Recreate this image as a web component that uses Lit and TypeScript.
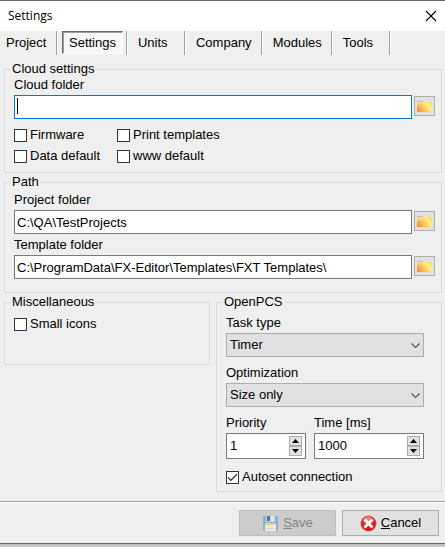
import { LitElement, html, css, svg } from "lit";
import { customElement, property } from "lit/decorators.js";

const controls = css`
  :host {
    display: block;
    font-family: "Liberation Sans", Arial, sans-serif;
    font-size: 13px;
    line-height: 16px;
    color: #000;
  }
  * {
    box-sizing: border-box;
  }
  button,
  input,
  select {
    font: inherit;
    color: inherit;
    margin: 0;
    border-radius: 0;
    outline: none;
  }
  label {
    display: block;
  }
`;

const folderIcon = svg`
  <svg width="17" height="13" viewBox="0 0 17 13" aria-hidden="true">
    <defs>
      <linearGradient id="fold" x1="0" y1="0.75" x2="1" y2="0.25">
        <stop offset="0" stop-color="#f0923c" />
        <stop offset="0.4" stop-color="#f9c65a" />
        <stop offset="0.75" stop-color="#faf08a" />
        <stop offset="1" stop-color="#f8dc68" />
      </linearGradient>
      <linearGradient id="shine" x1="0" y1="0" x2="1" y2="1">
        <stop offset="0" stop-color="#fff" stop-opacity="0.5" />
        <stop offset="0.5" stop-color="#fff" stop-opacity="0" />
      </linearGradient>
    </defs>
    <path d="M1 1H7V2H1Z" fill="#c3bfb8" />
    <path d="M1 2H16V12H1Z" fill="url(#fold)" />
    <path d="M1 2H11L1 9Z" fill="url(#shine)" />
    <path d="M7 1.5H16" stroke="#eedfc4" />
    <path d="M16.5 2V11" stroke="#efe3b8" />
  </svg>`;

@customElement("folder-field")
class FolderField extends LitElement {
  @property() label = "";
  @property() value = "";
  @property({ type: Boolean }) active = false;

  static styles = [
    controls,
    css`
      .row {
        display: flex;
        align-items: flex-start;
        gap: 2px;
        margin-top: 2px;
      }
      .box {
        flex: 1;
        min-width: 0;
        position: relative;
      }
      .text {
        display: block;
        width: 100%;
        height: 24px;
        padding: 0 2px;
        border: 1px solid #7a7a7a;
        background: #fff;
      }
      .active .text {
        border-color: #0078d7;
        caret-color: transparent;
      }
      .active::after {
        content: "";
        position: absolute;
        left: 3px;
        top: 3px;
        width: 1px;
        height: 16px;
        background: #000;
      }
      .browse {
        display: flex;
        align-items: center;
        justify-content: center;
        width: 21px;
        height: 20px;
        margin-top: 1px;
        padding: 0;
        border: 1px solid #adadad;
        background: #e1e1e1;
      }
    `,
  ];

  render() {
    return html`
      <label for="path">${this.label}</label>
      <div class="row">
        <div class="box ${this.active ? "active" : ""}">
          <input class="text" id="path" type="text" .value=${this.value} />
        </div>
        <button class="browse" type="button" aria-label="Browse ${this.label}">${folderIcon}</button>
      </div>
    `;
  }
}

@customElement("check-box")
class CheckBox extends LitElement {
  @property() label = "";
  @property({ type: Boolean }) checked = false;

  static styles = [
    controls,
    css`
      .check {
        display: flex;
        align-items: center;
        gap: 3px;
        height: 16px;
        white-space: nowrap;
      }
      .mark {
        position: relative;
        display: flex;
      }
      .tick {
        appearance: none;
        width: 13px;
        height: 13px;
        border: 1px solid #333;
        background: #fff;
      }
      .glyph {
        position: absolute;
        inset: 0;
        display: none;
        pointer-events: none;
      }
      .tick:checked + .glyph {
        display: block;
      }
    `,
  ];

  render() {
    return html`
      <label class="check">
        <span class="mark">
          <input class="tick" type="checkbox" .checked=${this.checked} />
          <svg class="glyph" width="13" height="13" viewBox="0 0 13 13" aria-hidden="true">
            <path d="M2 6.5L4.8 9.3L11 3.2" fill="none" stroke="#333" stroke-width="1.2" />
          </svg>
        </span>
        ${this.label}
      </label>
    `;
  }
}

@customElement("drop-down")
class DropDown extends LitElement {
  @property() label = "";
  @property() value = "";

  static styles = [
    controls,
    css`
      .box {
        position: relative;
        margin-top: 2px;
      }
      .select {
        appearance: none;
        display: block;
        width: 100%;
        height: 24px;
        padding: 0 20px 0 3px;
        border: 1px solid #adadad;
        background: #e1e1e1;
      }
      .chevron {
        position: absolute;
        right: 4px;
        top: 9px;
        pointer-events: none;
      }
    `,
  ];

  render() {
    return html`
      <label for="choice">${this.label}</label>
      <div class="box">
        <select class="select" id="choice">
          <option>${this.value}</option>
        </select>
        <svg class="chevron" width="9" height="7" viewBox="0 0 9 7" aria-hidden="true">
          <path d="M0.5 1.5L4.5 5.5L8.5 1.5" fill="none" stroke="#555" stroke-width="1.2" />
        </svg>
      </div>
    `;
  }
}

@customElement("spin-edit")
class SpinEdit extends LitElement {
  @property() label = "";
  @property({ type: Number }) value = 0;

  static styles = [
    controls,
    css`
      .box {
        display: flex;
        height: 26px;
        margin-top: 2px;
        padding: 2px 3px 2px 0;
        border: 1px solid #7a7a7a;
        background: #fff;
      }
      .number {
        appearance: textfield;
        flex: 1;
        width: 0;
        min-width: 0;
        height: 18px;
        padding: 0 0 0 3px;
        border: 0;
        background: none;
      }
      .number::-webkit-inner-spin-button {
        appearance: none;
        margin: 0;
      }
      .steps {
        display: flex;
        flex-direction: column;
      }
      .step {
        display: flex;
        align-items: center;
        justify-content: center;
        width: 13px;
        height: 10px;
        padding: 0;
        border: 1px solid #adadad;
        background: #e1e1e1;
      }
    `,
  ];

  render() {
    return html`
      <label for="number">${this.label}</label>
      <div class="box">
        <input class="number" id="number" type="number" .value=${String(this.value)} />
        <span class="steps">
          <button class="step" type="button" aria-label="Increase" @click=${() => this.value++}>
            <svg width="7" height="4" viewBox="0 0 7 4"><path d="M0 4L3.5 0L7 4Z" /></svg>
          </button>
          <button class="step" type="button" aria-label="Decrease" @click=${() => this.value--}>
            <svg width="7" height="4" viewBox="0 0 7 4"><path d="M0 0L3.5 4L7 0Z" /></svg>
          </button>
        </span>
      </div>
    `;
  }
}

@customElement("app-root")
class AppRoot extends LitElement {
  static styles = [
    controls,
    css`
      .window {
        border-top: 1px solid #6b6769;
        border-bottom: 1px solid #6b6b6b;
        background: #efefef;
      }
      .titlebar {
        display: flex;
        align-items: center;
        justify-content: space-between;
        height: 30px;
        padding: 0 8px;
        background: #fff;
      }
      .title {
        margin: 0;
        font: 400 12px/16px "Open Sans", "Noto Sans", sans-serif;
      }
      .close {
        display: flex;
        padding: 0;
        border: 0;
        background: none;
      }
      .tabs {
        display: flex;
        height: 24px;
      }
      .slot {
        display: flex;
        min-width: 58px;
        border-right: 1px solid #fff;
        box-shadow: inset -1px 0 #a0a0a0;
      }
      .tab {
        padding: 0 10px;
        border: 0;
        background: none;
        line-height: 24px;
        text-align: left;
      }
      .slot:first-child .tab {
        padding-left: 6px;
      }
      .slot.current {
        padding: 0 4px;
      }
      .current .tab {
        padding: 0 6px;
        height: 23px;
        line-height: 22px;
        border: 1px solid #fff;
        border-top-color: #696969;
        border-left-color: #696969;
        box-shadow: inset 1px 1px #a0a0a0;
        background: #f8f8f8;
      }
      .page {
        padding: 6px 3px 9px 4px;
        display: flex;
        flex-direction: column;
        gap: 1px;
      }
      .group {
        min-width: 0;
        margin: 0;
        padding: 0;
        border: 1px solid #dcdcdc;
      }
      .legend {
        margin-left: 6px;
        padding: 0 1px;
      }
      .body {
        padding: 0 6px 8px 9px;
      }
      .checks {
        display: grid;
        grid-template-columns: 103px 1fr;
        row-gap: 5px;
        margin-top: 8px;
      }
      .paths {
        display: flex;
        flex-direction: column;
        gap: 3px;
        padding-top: 2px;
        padding-bottom: 13px;
      }
      .columns {
        display: grid;
        grid-template-columns: minmax(0, 206fr) minmax(0, 226fr);
        gap: 6px;
        align-items: start;
      }
      .misc {
        padding-top: 6px;
        padding-bottom: 32px;
      }
      .pcs {
        display: flex;
        flex-direction: column;
        gap: 8px;
        padding: 5px 17px 6px 9px;
      }
      .spins {
        display: grid;
        grid-template-columns: minmax(0, 8fr) minmax(0, 11fr);
        gap: 8px;
        padding-bottom: 2px;
      }
      .footer {
        display: flex;
        justify-content: flex-end;
        gap: 6px;
        padding: 8px 6px 7px;
        border-top: 1px solid #a0a0a0;
        box-shadow: inset 0 1px #fff;
      }
      .action {
        display: flex;
        align-items: center;
        justify-content: center;
        gap: 4px;
        width: 97px;
        height: 26px;
        padding: 0;
        border: 1px solid #adadad;
        background: #e1e1e1;
      }
      .action:disabled {
        border-color: #bfbfbf;
        background: #ccc;
        color: #838383;
      }
      .shadow {
        height: 3px;
        background: linear-gradient(#b9b9b9, #d2d2d2);
      }
    `,
  ];

  render() {
    const tabs = ["Project", "Settings", "Units", "Company", "Modules", "Tools"];
    return html`
      <main class="window">
        <header class="titlebar">
          <h1 class="title">Settings</h1>
          <button class="close" type="button" aria-label="Close">
            <svg width="12" height="12" viewBox="0 0 12 12">
              <path d="M1 1L11 11M11 1L1 11" stroke="#000" stroke-width="1.1" />
            </svg>
          </button>
        </header>
        <nav class="tabs" role="tablist">
          ${tabs.map(
            (name) => html`
              <div class="slot ${name === "Settings" ? "current" : ""}" role="presentation">
                <button class="tab" type="button" role="tab" aria-selected=${name === "Settings"}>${name}</button>
              </div>
            `
          )}
        </nav>
        <div class="page">
          <fieldset class="group">
            <legend class="legend">Cloud settings</legend>
            <div class="body">
              <folder-field label="Cloud folder" active></folder-field>
              <div class="checks">
                <check-box label="Firmware"></check-box>
                <check-box label="Print templates"></check-box>
                <check-box label="Data default"></check-box>
                <check-box label="www default"></check-box>
              </div>
            </div>
          </fieldset>
          <fieldset class="group">
            <legend class="legend">Path</legend>
            <div class="body paths">
              <folder-field label="Project folder" value="C:\\QA\\TestProjects"></folder-field>
              <folder-field
                label="Template folder"
                value="C:\\ProgramData\\FX-Editor\\Templates\\FXT Templates\\"
              ></folder-field>
            </div>
          </fieldset>
          <div class="columns">
            <fieldset class="group">
              <legend class="legend">Miscellaneous</legend>
              <div class="body misc">
                <check-box label="Small icons"></check-box>
              </div>
            </fieldset>
            <fieldset class="group">
              <legend class="legend">OpenPCS</legend>
              <div class="pcs">
                <drop-down label="Task type" value="Timer"></drop-down>
                <drop-down label="Optimization" value="Size only"></drop-down>
                <div class="spins">
                  <spin-edit label="Priority" value="1"></spin-edit>
                  <spin-edit label="Time [ms]" value="1000"></spin-edit>
                </div>
                <check-box label="Autoset connection" checked></check-box>
              </div>
            </fieldset>
          </div>
        </div>
        <footer class="footer">
          <button class="action" type="button" disabled>
            <svg width="17" height="17" viewBox="0 0 17 17" aria-hidden="true">
              <path d="M1 1H15L16 2V16H2L1 15Z" fill="#8ab2d6" />
              <path d="M4 1H13V7H4Z" fill="#c3d3de" />
              <path d="M5 1H8V6H5Z" fill="#4f7795" />
              <path d="M9 1H12V6H9Z" fill="#e2e8ec" />
              <path d="M3 8H14V16H3Z" fill="#eaeae8" />
              <path d="M3 8H14V10H3Z" fill="#e8d487" />
              <path d="M4 13.5H13" stroke="#d3d3d1" />
            </svg>
            <span><u>S</u>ave</span>
          </button>
          <button class="action" type="button">
            <svg width="17" height="17" viewBox="0 0 17 17" aria-hidden="true">
              <defs>
                <radialGradient id="red" cx="0.45" cy="0.2" r="0.85">
                  <stop offset="0" stop-color="#f79a94" />
                  <stop offset="0.5" stop-color="#e3292c" />
                  <stop offset="1" stop-color="#c01018" />
                </radialGradient>
              </defs>
              <circle cx="8.5" cy="8.5" r="7.6" fill="url(#red)" stroke="#cf4a4a" stroke-width="0.8" />
              <path d="M5.5 5.5L11.5 11.5M11.5 5.5L5.5 11.5" stroke="#fff" stroke-width="2.8" stroke-linecap="square" />
            </svg>
            <span><u>C</u>ancel</span>
          </button>
        </footer>
      </main>
      <div class="shadow"></div>
    `;
  }
}
